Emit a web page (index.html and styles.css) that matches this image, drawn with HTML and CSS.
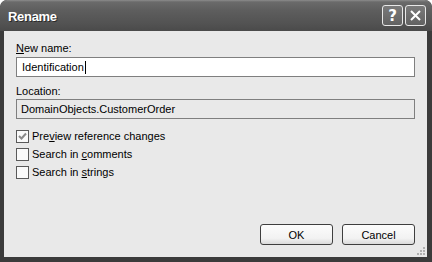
FILE: index.html
```html
<!DOCTYPE html>
<html lang="en">
<head>
    <meta charset="UTF-8">
    <title>Rename</title>
    <link rel="stylesheet" href="styles.css">
</head>
<body>
    <div class="window">
        <div class="titlebar">
            <span class="title">Rename</span>
            <div class="caption-btns">
                <span class="cap-btn">?</span>
                <span class="cap-btn">
                    <svg width="13" height="13" viewBox="0 0 13 13"><path d="M2 2 L11 11 M11 2 L2 11" stroke="#fff" stroke-width="2"/></svg>
                </span>
            </div>
        </div>
        <div class="client">
            <div class="label"><u>N</u>ew name:</div>
            <div class="textbox">Identification<span class="caret"></span></div>
            <div class="label label-loc">Location:</div>
            <div class="textbox readonly">DomainObjects.CustomerOrder</div>

            <div class="checks">
                <div class="check-row">
                    <span class="box">
                        <svg width="11" height="11" viewBox="0 0 11 11"><path d="M2 5 L4.5 7.5 L9 2.5" fill="none" stroke="#8a8a8a" stroke-width="2"/></svg>
                    </span>
                    <span>Pre<u>v</u>iew reference changes</span>
                </div>
                <div class="check-row">
                    <span class="box"></span>
                    <span>Search in <u>c</u>omments</span>
                </div>
                <div class="check-row">
                    <span class="box"></span>
                    <span>Search in <u>s</u>trings</span>
                </div>
            </div>

            <div class="buttons">
                <button class="btn">OK</button>
                <button class="btn">Cancel</button>
            </div>
            <svg class="grip" width="10" height="10" viewBox="0 0 10 10">
                <rect x="7" y="1" width="2" height="2" fill="#b0b0b0"/>
                <rect x="4" y="4" width="2" height="2" fill="#b0b0b0"/>
                <rect x="7" y="4" width="2" height="2" fill="#b0b0b0"/>
                <rect x="1" y="7" width="2" height="2" fill="#b0b0b0"/>
                <rect x="4" y="7" width="2" height="2" fill="#b0b0b0"/>
                <rect x="7" y="7" width="2" height="2" fill="#b0b0b0"/>
            </svg>
        </div>
    </div>
</body>
</html>
```

FILE: styles.css
```css
*{
    padding: 0;
    margin: 0;
    box-sizing: border-box;
}

body{
    background: #fff;
    font-family: "Liberation Sans", Arial, sans-serif;
    font-size: 11px;
    color: #000;
}

.window{
    width: 432px;
    height: 262px;
    background: #3b3b3b;
    border-radius: 7px 7px 0 0;
    display: flex;
    flex-direction: column;
    padding: 0 5px 5px 4px;
    overflow: hidden;
}

.titlebar{
    height: 31px;
    margin: 0 -5px 0 -4px;
    padding: 2px 6px 0 8px;
    display: flex;
    align-items: center;
    justify-content: space-between;
    background: linear-gradient(#8c8c8c 0px, #6a6a6a 2px, #5e5e5e 10px, #525252 24px, #4a4a4a 31px);
    border-radius: 7px 7px 0 0;
}

.title{
    color: #fff;
    font-family: "Liberation Sans", Arial, sans-serif;
    font-weight: bold;
    font-size: 13px;
    letter-spacing: -0.3px;
    text-shadow: 1px 1px 0 #2a2a2a;
}

.caption-btns{
    display: flex;
    gap: 2px;
    margin-top: -2px;
}

.cap-btn{
    width: 21px;
    height: 21px;
    border: 1px solid #e8e8e8;
    border-radius: 3px;
    background: linear-gradient(#7a7a7a, #626262);
    color: #fff;
    font-family: "DejaVu Sans", sans-serif;
    font-weight: bold;
    font-size: 15px;
    display: flex;
    align-items: center;
    justify-content: center;
}

.client{
    position: relative;
    flex: 1;
    background: #e9e9e9;
    display: flex;
    flex-direction: column;
    padding: 11px 12px 12px 12px;
}

.label{
    height: 13px;
    line-height: 13px;
    margin-bottom: 2px;
}

.label-loc{
    margin-top: 8px;
    margin-bottom: 1px;
}

.textbox{
    height: 20px;
    border: 1px solid #7f7f7f;
    background: #fff;
    padding: 0 5px;
    display: flex;
    align-items: center;
}

.textbox.readonly{
    background: #e9e9e9;
    padding: 0 4px;
}

.caret{
    display: inline-block;
    width: 1px;
    height: 13px;
    background: #000;
    margin-left: 1px;
}

.checks{
    margin-top: 8px;
    display: flex;
    flex-direction: column;
}

.check-row{
    height: 18px;
    display: flex;
    align-items: center;
    gap: 3px;
}

.box{
    width: 13px;
    height: 13px;
    border: 1px solid #5a5a5a;
    background: #fafafa;
    display: flex;
    align-items: center;
    justify-content: center;
}

.buttons{
    margin-top: auto;
    display: flex;
    justify-content: flex-end;
    gap: 9px;
}

.btn{
    width: 73px;
    height: 21px;
    border: 1px solid #3e3e3e;
    border-radius: 3px;
    background: linear-gradient(#fcfcfc, #f2f2f2 70%, #dadada);
    font-family: "Liberation Sans", Arial, sans-serif;
    font-size: 11px;
    color: #000;
}

.grip{
    position: absolute;
    right: 1px;
    bottom: 1px;
}
```
